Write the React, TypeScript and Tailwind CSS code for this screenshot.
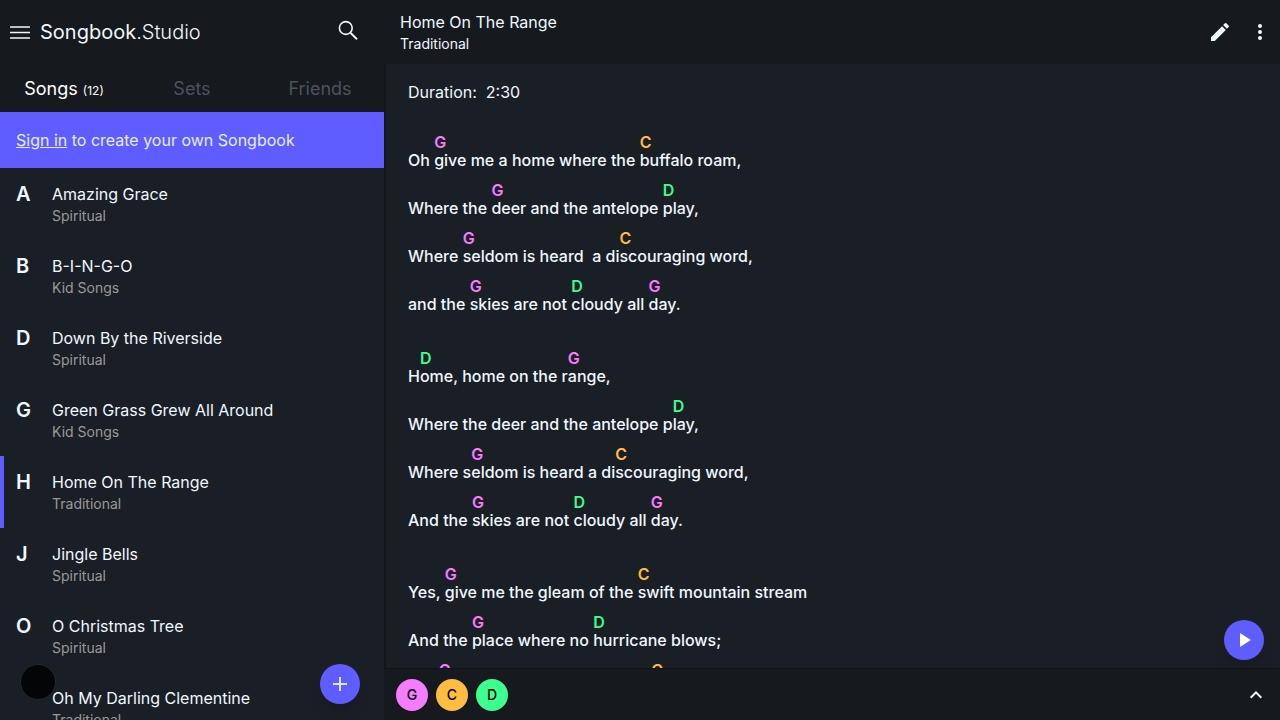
import React from "react";

type Segment = { chord?: string; text: string };

const songs = [
  { letter: "A", title: "Amazing Grace", artist: "Spiritual" },
  { letter: "B", title: "B-I-N-G-O", artist: "Kid Songs" },
  { letter: "D", title: "Down By the Riverside", artist: "Spiritual" },
  { letter: "G", title: "Green Grass Grew All Around", artist: "Kid Songs" },
  { letter: "H", title: "Home On The Range", artist: "Traditional" },
  { letter: "J", title: "Jingle Bells", artist: "Spiritual" },
  { letter: "O", title: "O Christmas Tree", artist: "Spiritual" },
  { letter: "", title: "Oh My Darling Clementine", artist: "Traditional" },
];

// Chords sit in square brackets right before the syllable they belong to.
const verses = [
  [
    "Oh [G]give me a home where the [C]buffalo roam,",
    "Where the [G]deer and the antelope [D]play,",
    "Where [G]seldom is heard  a di[C]scouraging word,",
    "and the [G]skies are not [D]cloudy all [G]day.",
  ],
  [
    "H[D]ome, home on the r[G]ange,",
    "Where the deer and the antelope p[D]lay,",
    "Where s[G]eldom is heard a di[C]scouraging word,",
    "And the [G]skies are not [D]cloudy all [G]day.",
  ],
  [
    "Yes, [G]give me the gleam of the [C]swift mountain stream",
    "And the [G]place where no [D]hurricane blows;",
    "Oh, [G]give me the park where the [C]prairie dogs bark",
  ],
];

const chordText: Record<string, string> = {
  G: "text-[#f67cff]",
  C: "text-[#ffbc42]",
  D: "text-[#3cff8f]",
};
const chordBg: Record<string, string> = {
  G: "bg-[#f67cff]",
  C: "bg-[#ffbc42]",
  D: "bg-[#3cff8f]",
};

function parseLine(line: string): Segment[] {
  return line.split(/(?=\[)/).map((part) => {
    const m = part.match(/^\[(\w+)\](.*)$/);
    return m ? { chord: m[1], text: m[2] } : { text: part };
  });
}

function LyricLine({ line }: { line: string }) {
  return (
    <p className="flex h-12 items-end pb-[3px] leading-[18px] whitespace-pre">
      {parseLine(line).map((s, i) => (
        <span key={i} className="flex flex-col">
          {s.chord && <span className={`font-semibold ${chordText[s.chord]}`}>{s.chord}</span>}
          <span>{s.text}</span>
        </span>
      ))}
    </p>
  );
}

function Sidebar() {
  return (
    <aside className="relative flex w-96 shrink-0 flex-col">
      <header className="flex h-16 shrink-0 items-center bg-[#16191d] pr-6 pl-2">
        <button aria-label="Menu" className="flex size-6 items-center justify-center">
          <svg viewBox="0 0 24 24" className="size-6" fill="none" stroke="currentColor" strokeWidth="1.3">
            <path d="M2 7h20M2 12.500h20M2 18h20" />
          </svg>
        </button>
        <h1 className="flex-1 pl-2 text-xl font-light">
          <span className="font-normal">Songbook</span>.Studio
        </h1>
        <button aria-label="Search" className="flex size-6 items-center justify-center">
          <svg viewBox="0 0 24 24" className="size-6" fill="none" stroke="currentColor" strokeWidth="1.600">
            <circle cx="9.800" cy="8" r="6.400" />
            <path d="M14.300 12.600L21 19.200" strokeWidth="2" />
          </svg>
        </button>
      </header>
      <nav className="grid h-12 shrink-0 grid-cols-3 bg-[#16191d] pt-px text-lg text-[#4d535c]">
        <button className="text-white">
          Songs <span className="text-xs">(12)</span>
        </button>
        <button>Sets</button>
        <button>Friends</button>
      </nav>
      <p className="flex h-14 shrink-0 items-center bg-[#5f5dff] px-4 whitespace-pre text-[#e6ecff]">
        <a href="#signin" className="underline">Sign in</a> to create your own Songbook
      </p>
      <ul className="min-h-0 flex-1 overflow-y-auto [scrollbar-width:none]">
        {songs.map((s) => (
          <li key={s.title}>
            <a
              href="#song"
              className={`flex h-18 border-l-4 py-[14px] pl-3 ${s.letter === "H" ? "border-[#5f5dff]" : "border-transparent"}`}
            >
              <span className="w-9 text-xl leading-6 font-semibold">{s.letter}</span>
              <span className="flex flex-col">
                <span className="leading-6">{s.title}</span>
                <span className="text-sm leading-5 text-[#9a9a9a]">{s.artist}</span>
              </span>
            </a>
          </li>
        ))}
      </ul>
      <div className="absolute bottom-5 left-5 size-9 rounded-full border border-[#25292d] bg-[#040506]" />
      <button
        aria-label="Add song"
        className="absolute right-6 bottom-4 flex size-10 items-center justify-center rounded-full bg-[#5f5dff] shadow-lg"
      >
        <svg viewBox="0 0 24 24" className="size-6" stroke="#dfe6ff" strokeWidth="2">
          <path d="M5 12h14M12 5v14" />
        </svg>
      </button>
    </aside>
  );
}

export default function App() {
  return (
    <div className="flex h-screen overflow-hidden bg-[#1a1e25] font-['Inter',sans-serif] text-base text-[#f0f8ff]">
      <Sidebar />
      <main className="flex min-w-0 flex-1 flex-col">
        <header className="flex h-16 shrink-0 items-center bg-[#16191d] pr-2 pl-4">
          <div className="flex-1">
            <h2 className="leading-6">Home On The Range</h2>
            <p className="text-sm leading-5">Traditional</p>
          </div>
          <button aria-label="Edit" className="mr-4 flex size-6 items-center justify-center">
            <svg viewBox="0 0 24 24" className="size-6" fill="currentColor">
              <path d="M3 17.250V21h3.750L17.810 9.940l-3.750-3.750L3 17.250zM20.710 7.040a1 1 0 0 0 0-1.410l-2.340-2.340a1 1 0 0 0-1.410 0l-1.830 1.830 3.750 3.750 1.830-1.830z" />
            </svg>
          </button>
          <button aria-label="More" className="flex size-6 items-center justify-center">
            <svg viewBox="0 0 24 24" className="size-6" fill="currentColor">
              <circle cx="12" cy="6" r="2" />
              <circle cx="12" cy="12" r="2" />
              <circle cx="12" cy="18" r="2" />
            </svg>
          </button>
        </header>
        <div className="relative flex min-h-0 flex-1 flex-col border-l-2 border-[#121519]">
          <article className="min-h-0 flex-1 overflow-y-auto px-[22px] pt-4 font-medium [scrollbar-width:none]">
            <p className="mb-5 leading-6 font-normal whitespace-pre">Duration:  2:30</p>
            {verses.map((verse, i) => (
              <section key={i} className="mb-6">
                {verse.map((line) => (
                  <LyricLine key={line} line={line} />
                ))}
              </section>
            ))}
          </article>
          <button
            aria-label="Play"
            className="absolute right-4 bottom-2 flex size-10 items-center justify-center rounded-full bg-[#5f5dff] shadow-lg"
          >
            <svg viewBox="0 0 24 24" className="size-6" fill="#ffffff">
              <path d="M8 5v14l11-7z" />
            </svg>
          </button>
        </div>
        <footer className="flex h-[52px] shrink-0 items-center gap-2 border-t border-[#101317] bg-[#16191d] px-3">
          {["G", "C", "D"].map((c) => (
            <button key={c} className={`size-8 rounded-full text-sm font-medium text-black ${chordBg[c]}`}>
              {c}
            </button>
          ))}
          <button aria-label="Expand chords" className="ml-auto flex size-6 items-center justify-center">
            <svg viewBox="0 0 24 24" className="size-6" fill="none" stroke="currentColor" strokeWidth="2">
              <path d="M6.700 14.700l5.300-5.300 5.300 5.300" />
            </svg>
          </button>
        </footer>
      </main>
    </div>
  );
}
